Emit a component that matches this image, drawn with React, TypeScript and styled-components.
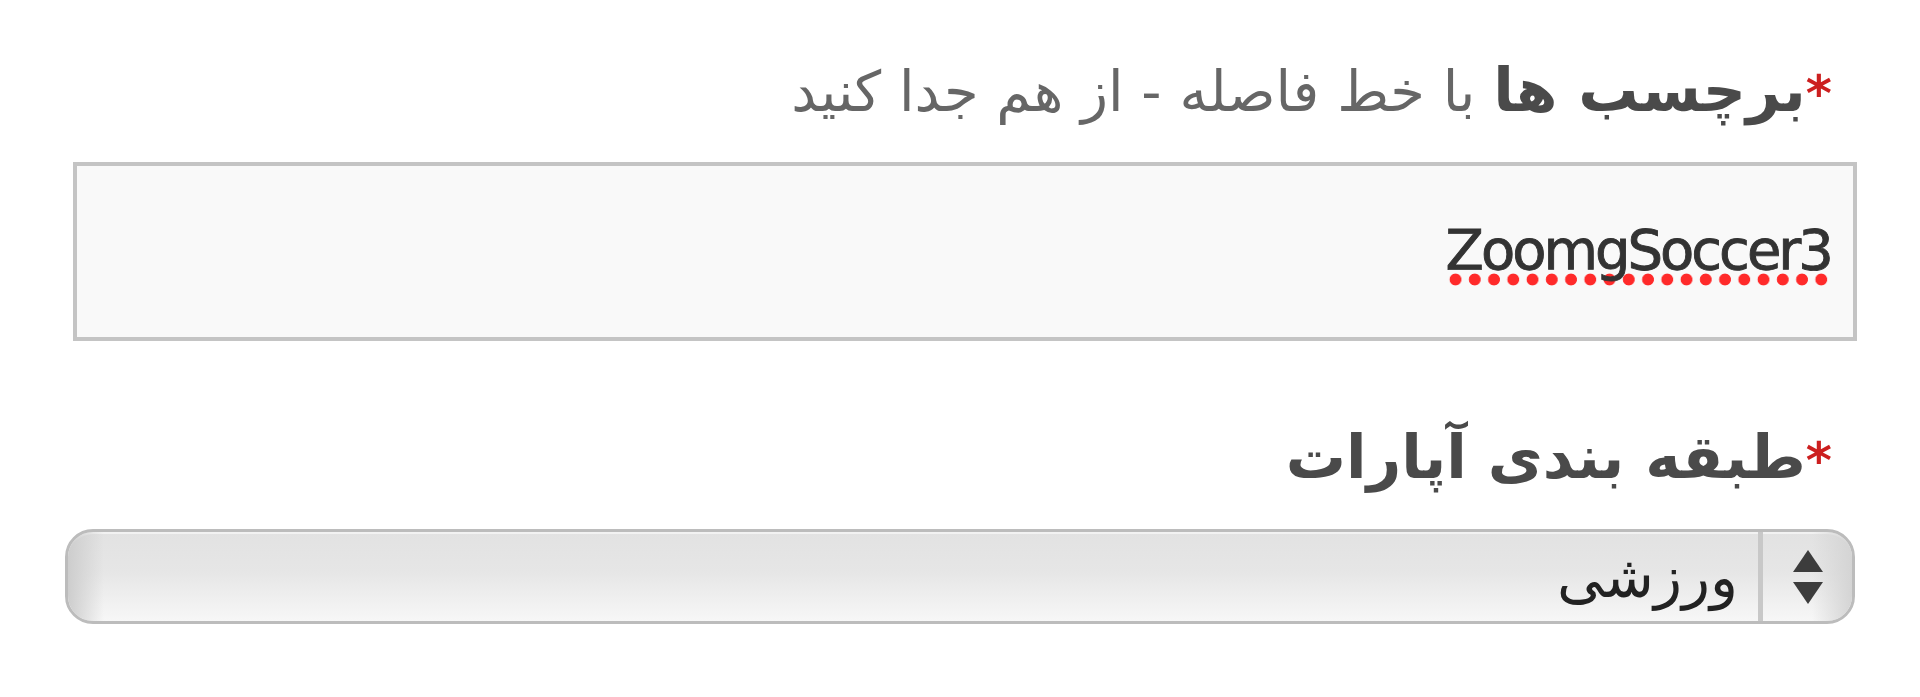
import * as React from "react";
import styled, { createGlobalStyle } from "styled-components";

const GlobalStyle = createGlobalStyle`
	html, body {
		margin: 0;
		padding: 0;
		background: #ffffff;
	}
	body {
		font-family: "DejaVu Sans", "Liberation Sans", sans-serif;
	}
`;

const Form = styled.form`
	direction: rtl;
	display: flex;
	flex-direction: column;
	padding: 50px 63px 0 65px;
`;

const Field = styled.div<{ $gap?: number }>`
	display: flex;
	flex-direction: column;
	margin-bottom: ${(p) => p.$gap ?? 0}px;
`;

const Label = styled.label`
	display: block;
	padding-right: 25px;
	font-size: 56px;
	line-height: 80px;
	color: #666666;
	margin-bottom: 28px;
	white-space: nowrap;
`;

const Required = styled.span`
	color: #cc1f1f;
	font-weight: bold;
	font-size: 50px;
`;

const LabelTitle = styled.strong`
	color: #4a4a4a;
	font-weight: bold;
	font-size: 60px;
`;

const TagsBox = styled.div`
	margin-left: 8px;
	height: 171px;
	border: 4px solid #c4c4c4;
	background: #f9f9f9;
	display: flex;
	align-items: center;
	padding: 0 22px;
	box-sizing: content-box;
`;

const TypedText = styled.span`
	direction: ltr;
	font-size: 56px;
	color: #333333;
	letter-spacing: -3px;
	-webkit-text-stroke: 0.9px #333333;
	padding-bottom: 4px;
	background-image: radial-gradient(circle, #ff2a2a 0 5.5px, transparent 6.3px);
	background-size: 19px 13px;
	background-repeat: space no-repeat;
	background-position: 0 100%;
`;

const SelectBox = styled.div`
	margin-right: 2px;
	height: 89px;
	border: 3px solid #bcbcbc;
	border-radius: 28px;
	display: flex;
	overflow: hidden;
	background: linear-gradient(#e2e2e2 0%, #e6e6e6 45%, #f7f7f7 100%);
	box-shadow: inset 0 2px 0 #f2f2f2;
`;

const ArrowCell = styled.div`
	width: 89px;
	display: flex;
	flex-direction: column;
	align-items: center;
	justify-content: center;
	gap: 10px;
	border-left: 5px solid #c8c8c8;
	background: linear-gradient(90deg, transparent 55%, #d4d4d4 100%);
`;

const SelectValue = styled.div`
	flex: 1;
	display: flex;
	align-items: center;
	padding-right: 20px;
	font-size: 58px;
	color: #222222;
	background: linear-gradient(90deg, #cdcdcd 0, transparent 36px);
`;

const Triangle = ({ down }: { down?: boolean }) => (
	<svg width="30" height="22" viewBox="0 0 30 22">
		<polygon
			points={down ? "0,0 30,0 15,22" : "15,0 30,22 0,22"}
			fill="#3c3c3c"
		/>
	</svg>
);

export default function App() {
	return (
		<>
			<GlobalStyle />
			<Form onSubmit={(e) => e.preventDefault()}>
				<Field $gap={76}>
					<Label>
						<Required>*</Required>
						<LabelTitle>برچسب ها</LabelTitle> با خط فاصله - از هم جدا کنید
					</Label>
					<TagsBox>
						<TypedText>ZoomgSoccer3</TypedText>
					</TagsBox>
				</Field>
				<Field>
					<Label>
						<Required>*</Required>
						<LabelTitle>طبقه بندی آپارات</LabelTitle>
					</Label>
					<SelectBox>
						<ArrowCell>
							<Triangle />
							<Triangle down />
						</ArrowCell>
						<SelectValue>ورزشی</SelectValue>
					</SelectBox>
				</Field>
			</Form>
		</>
	);
}
